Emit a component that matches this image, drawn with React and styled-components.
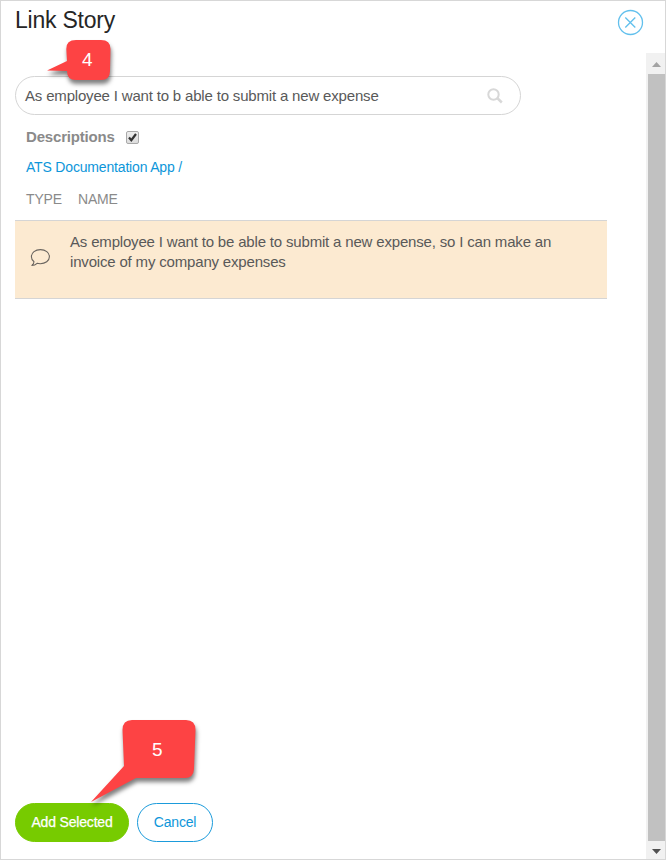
import React from "react";
import styled, { createGlobalStyle } from "styled-components";

const Global = createGlobalStyle`
  * { box-sizing: border-box; }
  body { margin: 0; background: #fff; font-family: "Liberation Sans", Arial, sans-serif; letter-spacing: -0.176px; }
`;

const Dialog = styled.main`
  position: relative;
  width: 666px;
  height: 860px;
  border: 1px solid #d7d7d7;
  background: #fff;
  display: flex;
  flex-direction: column;
  overflow: hidden;
`;
const Header = styled.header`
  height: 52px;
  flex: none;
  display: flex;
  justify-content: space-between;
  align-items: flex-start;
  padding: 5px 21px 0 14px;
`;
const Title = styled.h1`
  margin: 0;
  font-size: 23px;
  line-height: 28px;
  font-weight: 400;
  letter-spacing: -0.22px;
  color: #262626;
`;
const CloseButton = styled.button`
  width: 27px;
  height: 27px;
  margin-top: 3px;
  padding: 0;
  border: 0;
  background: none;
  svg { display: block; }
`;
const Body = styled.div`
  flex: 1;
  min-height: 0;
  display: flex;
`;
const Content = styled.div`
  flex: 1;
  display: flex;
  flex-direction: column;
  padding: 23px 0 17px 14px;
`;
const SearchBox = styled.div`
  width: 506px;
  height: 39px;
  flex: none;
  border: 1px solid #d5d5d5;
  border-radius: 20px;
  display: flex;
  align-items: center;
  justify-content: space-between;
  padding: 0 17px 0 9px;
`;
const SearchText = styled.span`
  font-size: 15px;
  color: #595959;
  white-space: nowrap;
`;
const Option = styled.label`
  display: flex;
  align-items: center;
  height: 18px;
  margin: 13px 0 0 11px;
  font-size: 15px;
  font-weight: 700;
  color: #8a8a8a;
`;
const OptionText = styled.span`
  width: 100px;
  line-height: 18px;
`;
const Crumb = styled.a`
  display: block;
  margin: 12px 0 0 11px;
  height: 18px;
  font-size: 14px;
  line-height: 18px;
  color: #0d96da;
`;
const TableHead = styled.div`
  display: flex;
  height: 18px;
  margin: 14px 0 12px 11px;
  font-size: 14px;
  line-height: 18px;
  color: #8a8a8a;
`;
const HeadCell = styled.span`
  width: ${(p) => p.$width || "auto"};
`;
const StoryRow = styled.div`
  display: flex;
  width: 592px;
  height: 79px;
  flex: none;
  border: solid #d5d5d5;
  border-width: 1px 0;
  background: #fcead1;
`;
const TypeCell = styled.div`
  width: 55px;
  padding: 27px 0 0 15px;
  svg { display: block; }
`;
const NameCell = styled.div`
  padding-top: 11px;
  font-size: 15px;
  line-height: 20px;
  color: #595959;
  white-space: nowrap;
`;
const Actions = styled.footer`
  display: flex;
  gap: 8px;
  margin-top: auto;
`;
const Button = styled.button`
  width: ${(p) => p.$width};
  height: 39px;
  padding: 0 0 2px;
  border: 1px solid ${(p) => (p.$primary ? "#77cb00" : "#1b9bdb")};
  border-radius: 20px;
  background: ${(p) => (p.$primary ? "#77cb00" : "#fff")};
  color: ${(p) => (p.$primary ? "#fff" : "#0d96da")};
  font: 14px "Liberation Sans", Arial, sans-serif;
  letter-spacing: -0.18px;
  -webkit-text-stroke: ${(p) => (p.$primary ? "0.25px" : "0")};
`;
const Scrollbar = styled.div`
  width: 19px;
  flex: none;
  background: #f1f1f1;
  display: flex;
  flex-direction: column;
  align-items: flex-end;
`;
const ArrowBox = styled.div`
  width: 17px;
  height: ${(p) => p.$height};
  display: flex;
  justify-content: center;
  padding-top: ${(p) => p.$top};
  svg { display: block; }
`;
const Thumb = styled.div`
  width: 17px;
  height: 767px;
  background: #c1c1c1;
`;
const Callout = styled.div`
  position: absolute;
  left: ${(p) => p.$x}px;
  top: ${(p) => p.$y}px;
  width: ${(p) => p.$w}px;
  height: ${(p) => p.$h}px;
  color: #fff;
  font-size: 19px;
  pointer-events: none;
  svg { position: absolute; inset: 0; overflow: visible; filter: drop-shadow(1px 4px 2px rgba(0, 0, 0, 0.5)); }
`;
const CalloutNumber = styled.span`
  position: absolute;
  left: ${(p) => p.$x}px;
  top: ${(p) => p.$y}px;
  line-height: 22px;
`;

export default function App() {
  return (
    <>
      <Global />
      <Dialog>
        <Header>
          <Title>Link Story</Title>
          <CloseButton aria-label="Close">
            <svg width="27" height="27" fill="none" stroke="#62c0ed" strokeWidth="1.3">
              <circle cx="13.5" cy="13.5" r="12" />
              <path d="M8.3 8.5l10 10M18.3 8.5l-10 10" />
            </svg>
          </CloseButton>
        </Header>
        <Body>
          <Content>
            <SearchBox>
              <SearchText>As employee I want to b able to submit a new expense</SearchText>
              <svg width="16" height="16" fill="none" stroke="#d8d8d8">
                <circle cx="6.5" cy="6.5" r="5.2" strokeWidth="2" />
                <path d="M10.2 10l4.6 4.5" strokeWidth="2.5" />
              </svg>
            </SearchBox>
            <Option>
              <OptionText>Descriptions</OptionText>
              <svg width="13" height="13">
                <defs>
                  <linearGradient id="box" x1="0" y1="0" x2="0" y2="1">
                    <stop offset="0" stopColor="#eee" />
                    <stop offset="1" stopColor="#dcdcdc" />
                  </linearGradient>
                </defs>
                <rect x=".5" y=".5" width="12" height="12" rx="1.5" fill="url(#box)" stroke="#a9a9a9" />
                <path d="M3 6.5l2.3 2.7L10 3" fill="none" stroke="#333" strokeWidth="2.2" />
              </svg>
            </Option>
            <Crumb>ATS Documentation App /</Crumb>
            <TableHead>
              <HeadCell $width="52px">TYPE</HeadCell>
              <HeadCell>NAME</HeadCell>
            </TableHead>
            <StoryRow>
              <TypeCell>
                <svg width="21" height="20" fill="none" stroke="#6a655f" strokeWidth="1.1" strokeLinejoin="round">
                  <path d="M4 13.8C2.2 12.5 1.4 10.8 1.4 8.8C1.4 4.7 5.3 1.6 10.4 1.6S19.4 4.7 19.4 8.8S15.3 15.7 10.3 15.7C9.2 15.7 8.1 15.6 7.1 15.3C5.7 16.7 4 17.5 1.9 17.5C3.1 16.5 3.9 15.3 4 13.8Z" />
                </svg>
              </TypeCell>
              <NameCell>
                As employee I want to be able to submit a new expense, so I can make an
                <br />
                invoice of my company expenses
              </NameCell>
            </StoryRow>
            <Actions>
              <Button $primary $width="114px">Add Selected</Button>
              <Button $width="76px">Cancel</Button>
            </Actions>
          </Content>
          <Scrollbar>
            <ArrowBox $height="21px" $top="9px">
              <svg width="9" height="5"><path d="M0 5L4.5 0L9 5Z" fill="#a3a3a3" /></svg>
            </ArrowBox>
            <Thumb />
            <ArrowBox $height="18px" $top="8px">
              <svg width="9" height="5"><path d="M0 0L4.5 5L9 0Z" fill="#505050" /></svg>
            </ArrowBox>
          </Scrollbar>
        </Body>
        <Callout $x={46} $y={39} $w={64} $h={40}>
          <svg width="64" height="40">
            <path d="M29 0H54Q63.5 0 63.5 9L63 31Q63 40 54 40H29Q20 40 20 31V31L0 30.5L20 21L19.3 9Q19 0 29 0Z" fill="#fd4344" />
          </svg>
          <CalloutNumber $x={35} $y={9}>4</CalloutNumber>
        </Callout>
        <Callout $x={90} $y={719} $w={105} $h={82}>
          <svg width="105" height="82">
            <path d="M41 0H95Q104.5 0 104.5 10L103 49Q102.5 58 94 58H45L0 82L33 46L31.5 10Q31.5 0 41 0Z" fill="#fd4344" />
          </svg>
          <CalloutNumber $x={61} $y={19}>5</CalloutNumber>
        </Callout>
      </Dialog>
    </>
  );
}
